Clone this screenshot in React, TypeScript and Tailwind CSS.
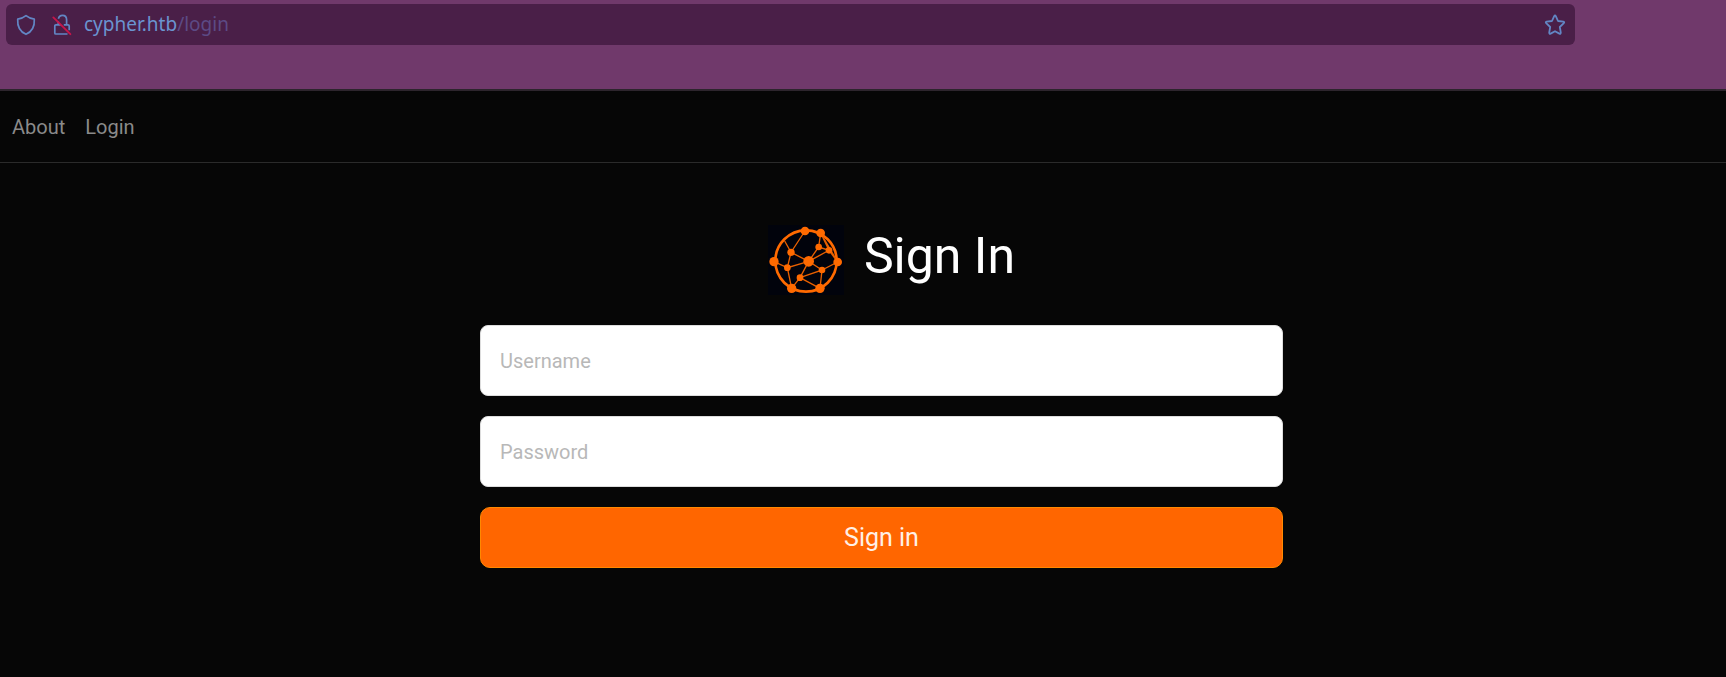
function ShieldIcon() {
  return (
    <svg viewBox="0 0 20 22" className="h-[22px] w-5" fill="none" stroke="#6286c4" strokeWidth="1.7" strokeLinejoin="round" aria-hidden="true">
      <path d="M10 1.6 C7.6 3.5 4.8 4.8 1.7 5.2 C1.3 11.3 3.6 17.4 10 20.3 C16.4 17.4 18.7 11.3 18.3 5.2 C15.2 4.8 12.4 3.5 10 1.6 Z" />
    </svg>
  );
}

function InsecureLockIcon() {
  return (
    <svg viewBox="0 0 20 22" className="h-[22px] w-5" fill="none" aria-hidden="true">
      <path d="M6.4 4.8 C6.9 2.5 8.3 1.4 10.5 1.4 C13.1 1.4 14.6 3.2 14.6 5.8 V10.8 M11.8 10.8 H16 Q17.2 10.8 17.2 12 V16.2 M6.3 7.6 V10.8 M8.8 10.8 H4 Q2.8 10.8 2.8 12 V19 Q2.8 20 3.8 20 H15.5" stroke="#6286c4" strokeWidth="1.7" />
      <path d="M1.3 3.4 L18.4 20.2" stroke="#c8154a" strokeWidth="1.8" strokeLinecap="round" />
    </svg>
  );
}

function StarIcon() {
  return (
    <svg viewBox="0 0 22 22" className="h-[22px] w-[22px]" fill="none" stroke="#6286c4" strokeWidth="1.8" strokeLinejoin="round" aria-hidden="true">
      <path d="M10.2 2.2 Q11 .8 11.8 2.2 L14 7 L19.4 7.7 Q20.8 8.1 19.8 9.2 L15.8 13 L16.8 18.6 Q16.8 20.2 15.4 19.6 L11 17.2 L6.6 19.6 Q5.2 20.2 5.2 18.6 L6.2 13 L2.2 9.2 Q1.2 8.1 2.6 7.7 L8 7 Z" />
    </svg>
  );
}

function NetworkLogo() {
  return (
    <svg viewBox="24 28 228 210" className="h-[70px] w-[76px] bg-[#01030c]" role="img" aria-label="Cypher">
      <circle cx="138" cy="136" r="92" fill="none" stroke="#ff6a00" strokeWidth="8" />
      <g stroke="#e86000" strokeWidth="4" fill="none">
        <path d="M135 46 L93 110 L74 76 M93 110 L146 137 L82 156 L93 110 M42 138 L82 156 L95 218" />
        <path d="M146 137 L176 94 L182 52 L207 104 L146 137 L186 163 L233 139 M176 94 L207 104 L233 139 M182 52 L233 139" />
        <path d="M146 137 L120 186 L186 163 L180 218 L120 186 L95 218" />
      </g>
      <g fill="#ff6a00">
        <circle cx="135" cy="46" r="13" />
        <circle cx="182" cy="52" r="13" />
        <circle cx="42" cy="138" r="14" />
        <circle cx="233" cy="139" r="13" />
        <circle cx="95" cy="218" r="14" />
        <circle cx="180" cy="218" r="14" />
        <circle cx="146" cy="137" r="16" />
        <circle cx="93" cy="110" r="11" />
        <circle cx="82" cy="156" r="10" />
        <circle cx="176" cy="94" r="10" />
        <circle cx="207" cy="104" r="10" />
        <circle cx="186" cy="163" r="10" />
        <circle cx="120" cy="186" r="10" />
      </g>
    </svg>
  );
}

const fieldClass =
  "h-[71px] w-full rounded-lg border border-[#dddddd] bg-white px-[19px] text-xl text-black outline-none placeholder:text-[#b8b8b8]";

export default function App() {
  return (
    <div className="flex min-h-screen flex-col bg-[#060606] font-[Roboto,sans-serif]">
      <header className="border-b-2 border-[#2d252d] bg-[#70396b] pt-1 pr-[151px] pb-11 pl-1.5">
        <div className="flex h-[41px] items-center rounded-md bg-[#4a1f48] pr-[9px] pl-2.5">
          <ShieldIcon />
          <span className="ml-4 flex">
            <InsecureLockIcon />
          </span>
          <p className="ml-3 flex-1 font-['Noto_Sans',sans-serif] text-[19px] text-[#6a94d0]">
            cypher.htb<span className="text-[#5c4a85]">/login</span>
          </p>
          <button type="button" aria-label="Bookmark this page">
            <StarIcon />
          </button>
        </div>
      </header>
      <nav className="flex h-[72px] items-center gap-5 border-b border-[#2a2a2a] px-3 text-xl text-[#8a8a8a]">
        <a href="#about">About</a>
        <a href="#login">Login</a>
      </nav>
      <main className="pt-[62px] pl-[37px]">
        <form className="mx-auto flex w-full max-w-[803px] flex-col gap-5" onSubmit={(e) => e.preventDefault()}>
          <div className="mb-2.5 flex justify-center gap-5 pl-5">
            <NetworkLogo />
            <h1 className="text-[50px] leading-[62px] text-white">Sign In</h1>
          </div>
          <input type="text" aria-label="Username" placeholder="Username" className={fieldClass} />
          <input type="password" aria-label="Password" placeholder="Password" className={fieldClass} />
          <button type="submit" className="h-[61px] w-full rounded-[10px] border border-[#ff8800] bg-[#ff6600] text-[25px] text-[#fff0e6]">
            Sign in
          </button>
        </form>
      </main>
    </div>
  );
}
